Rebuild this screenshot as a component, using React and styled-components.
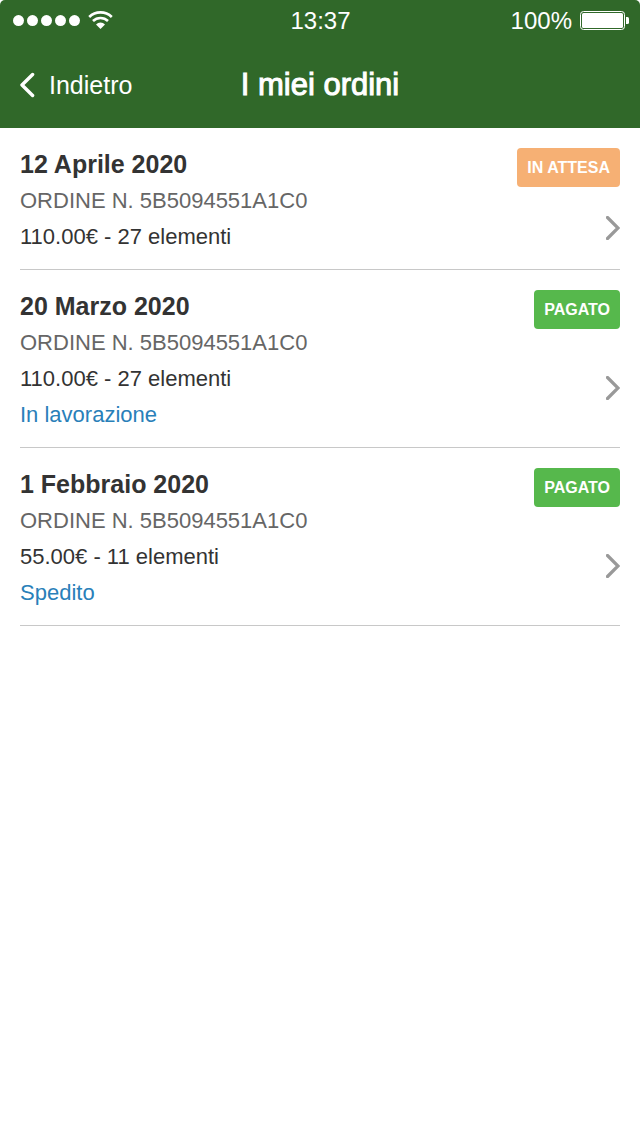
import React from "react";
import styled, { createGlobalStyle } from "styled-components";

const GlobalStyle = createGlobalStyle`
  * { box-sizing: border-box; }
  body {
    margin: 0;
    background: #fff;
    color: #333;
    font-family: "Liberation Sans", Arial, sans-serif;
    font-size: 22px;
    line-height: 36px;
  }
`;

const Header = styled.header`
  background: #306829;
  color: #fff;
  border-radius: 5px 5px 0 0;
`;

const StatusBar = styled.div`
  display: grid;
  grid-template-columns: 1fr auto 1fr;
  align-items: center;
  height: 42px;
  padding: 0 11px 0 12px;
  font-size: 24px;
`;

const Signal = styled.div`
  display: flex;
  align-items: center;
  gap: 7px;
`;

const Battery = styled.div`
  display: flex;
  align-items: center;
  justify-content: flex-end;
  gap: 8px;
`;

const NavBar = styled.nav`
  display: grid;
  grid-template-columns: 1fr auto 1fr;
  align-items: center;
  height: 86px;
  padding: 0 20px;
`;

const BackButton = styled.button`
  display: flex;
  align-items: center;
  justify-self: start;
  gap: 13px;
  padding: 0;
  border: 0;
  background: none;
  color: inherit;
  font: inherit;
  font-size: 25px;
  cursor: pointer;
`;

const PageTitle = styled.h1`
  margin: 0;
  font-size: 31px;
  font-weight: 400;
  -webkit-text-stroke: 1px currentColor;
`;

const OrderList = styled.ul`
  margin: 0;
  padding: 0 20px;
  list-style: none;
`;

const OrderRow = styled.a`
  display: flex;
  justify-content: space-between;
  border-bottom: 1px solid #c8c8c8;
  color: inherit;
  text-decoration: none;
`;

const OrderInfo = styled.div`
  padding: 17px 0 14px;
`;

const OrderDate = styled.h2`
  margin: 0;
  font-size: 25px;
  font-weight: 700;
  line-height: 38px;
`;

const OrderLine = styled.p`
  margin: 0;
  color: ${({ $color }) => $color || "inherit"};
`;

const OrderSide = styled.div`
  display: flex;
  flex-direction: column;
  align-items: flex-end;
  padding-top: 20px;
`;

const Tag = styled.span`
  padding: 0 10px;
  border-radius: 4px;
  background: ${({ $paid }) => ($paid ? "#56b84c" : "#f6b074")};
  color: #fff;
  font-size: 16px;
  font-weight: 700;
  line-height: 39px;
`;

const ChevronSlot = styled.div`
  display: flex;
  flex: 1;
  align-items: center;
`;

const orders = [
  { date: "12 Aprile 2020", total: "110.00€ - 27 elementi", paid: false },
  { date: "20 Marzo 2020", total: "110.00€ - 27 elementi", paid: true, state: "In lavorazione" },
  { date: "1 Febbraio 2020", total: "55.00€ - 11 elementi", paid: true, state: "Spedito" },
];

function SignalDots() {
  return (
    <svg width="69" height="12" viewBox="0 0 69 12" fill="#fff" aria-hidden="true">
      {[6.5, 20.5, 34.5, 48.5, 62.5].map((x) => (
        <circle key={x} cx={x} cy="5.6" r="5.5" />
      ))}
    </svg>
  );
}

function WifiIcon() {
  return (
    <svg width="25" height="20" viewBox="0 0 25 20" aria-hidden="true">
      <path d="M1.2 5.9a16.4 16.4 0 0 1 22.6 0" fill="none" stroke="#fff" strokeWidth="2.7" />
      <path d="M5 10a10.8 10.8 0 0 1 15 0" fill="none" stroke="#fff" strokeWidth="2.6" />
      <path d="M8 13.4a6.5 6.5 0 0 1 9 0L12.5 18z" fill="#fff" />
    </svg>
  );
}

function BatteryIcon() {
  return (
    <svg width="49" height="20" viewBox="0 0 49 20" aria-hidden="true">
      <rect x="0.5" y="0.5" width="44" height="18" rx="3" fill="none" stroke="#fff" />
      <rect x="2" y="2" width="41" height="15" rx="1.5" fill="#fff" />
      <path d="M46 6h1.5q1.5 0 1.5 1.5v4q0 1.5-1.5 1.5H46z" fill="#fff" />
    </svg>
  );
}

function BackIcon() {
  return (
    <svg width="16" height="26" viewBox="0 0 16 26" aria-hidden="true">
      <path d="M12.6 2.5L2 13l10.6 10.5" fill="none" stroke="#fff" strokeWidth="3.4" strokeLinecap="round" strokeLinejoin="round" />
    </svg>
  );
}

function ChevronIcon() {
  return (
    <svg width="14" height="24" viewBox="0 0 14 24" aria-hidden="true">
      <path d="M1.5 1.5L12 12 1.5 22.5" fill="none" stroke="#999" strokeWidth="3.2" strokeLinecap="round" />
    </svg>
  );
}

function Order({ date, total, paid, state }) {
  return (
    <li>
      <OrderRow href="#">
        <OrderInfo>
          <OrderDate>{date}</OrderDate>
          <OrderLine $color="#666">ORDINE N. 5B5094551A1C0</OrderLine>
          <OrderLine>{total}</OrderLine>
          {state && <OrderLine $color="#2980b9">{state}</OrderLine>}
        </OrderInfo>
        <OrderSide>
          <Tag $paid={paid}>{paid ? "PAGATO" : "IN ATTESA"}</Tag>
          <ChevronSlot>
            <ChevronIcon />
          </ChevronSlot>
        </OrderSide>
      </OrderRow>
    </li>
  );
}

export default function App() {
  return (
    <>
      <GlobalStyle />
      <Header>
        <StatusBar>
          <Signal>
            <SignalDots />
            <WifiIcon />
          </Signal>
          <span>13:37</span>
          <Battery>
            <span>100%</span>
            <BatteryIcon />
          </Battery>
        </StatusBar>
        <NavBar>
          <BackButton type="button">
            <BackIcon />
            Indietro
          </BackButton>
          <PageTitle>I miei ordini</PageTitle>
        </NavBar>
      </Header>
      <main>
        <OrderList>
          {orders.map((order) => (
            <Order key={order.date} {...order} />
          ))}
        </OrderList>
      </main>
    </>
  );
}
